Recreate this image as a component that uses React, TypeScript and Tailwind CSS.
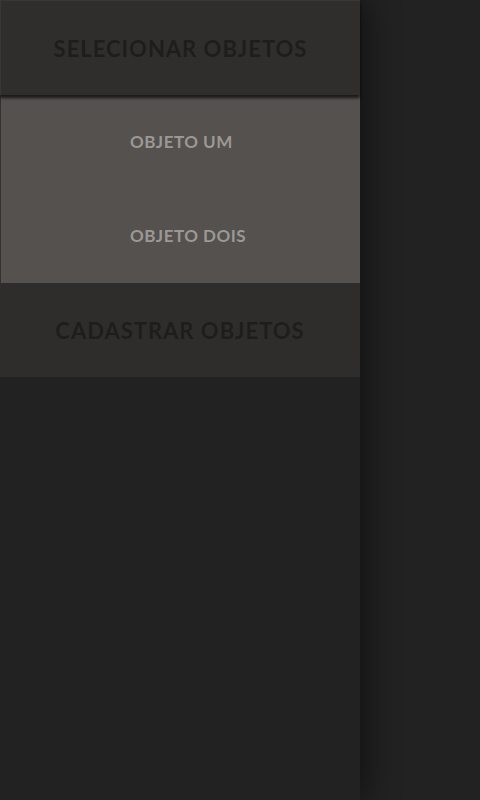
const items = ["OBJETO UM", "OBJETO DOIS"];

export default function App() {
  return (
    <div
      className="flex h-[800px] w-[480px] bg-[#222222]"
      style={{ fontFamily: "Lato, 'Open Sans', sans-serif" }}
    >
      <aside className="relative z-10 flex h-full w-[360px] flex-col bg-[#222222] shadow-[8px_0_30px_rgba(0,0,0,0.45)]">
        <div className="relative z-10 flex h-[95px] items-center justify-center border-t border-l border-[#3a3836] bg-[#302e2c] shadow-[0_3px_3px_rgba(0,0,0,0.7)]">
          <span className="text-[22px] font-bold tracking-[1px] text-[#1e1d1c]">
            SELECIONAR OBJETOS
          </span>
        </div>
        <ul className="flex flex-col border-l border-[#333130] bg-[#54514e]">
          {items.map((item) => (
            <li
              key={item}
              className="flex h-[94px] items-center pl-[129px] text-[17px] font-bold tracking-[0.5px] text-[#9b9895]"
            >
              {item}
            </li>
          ))}
        </ul>
        <div className="flex h-[94px] items-center justify-center bg-[#2f2d2b]">
          <span className="text-[22px] font-bold tracking-[1px] text-[#1e1d1c]">
            CADASTRAR OBJETOS
          </span>
        </div>
      </aside>
      <main className="flex-1" />
    </div>
  );
}
